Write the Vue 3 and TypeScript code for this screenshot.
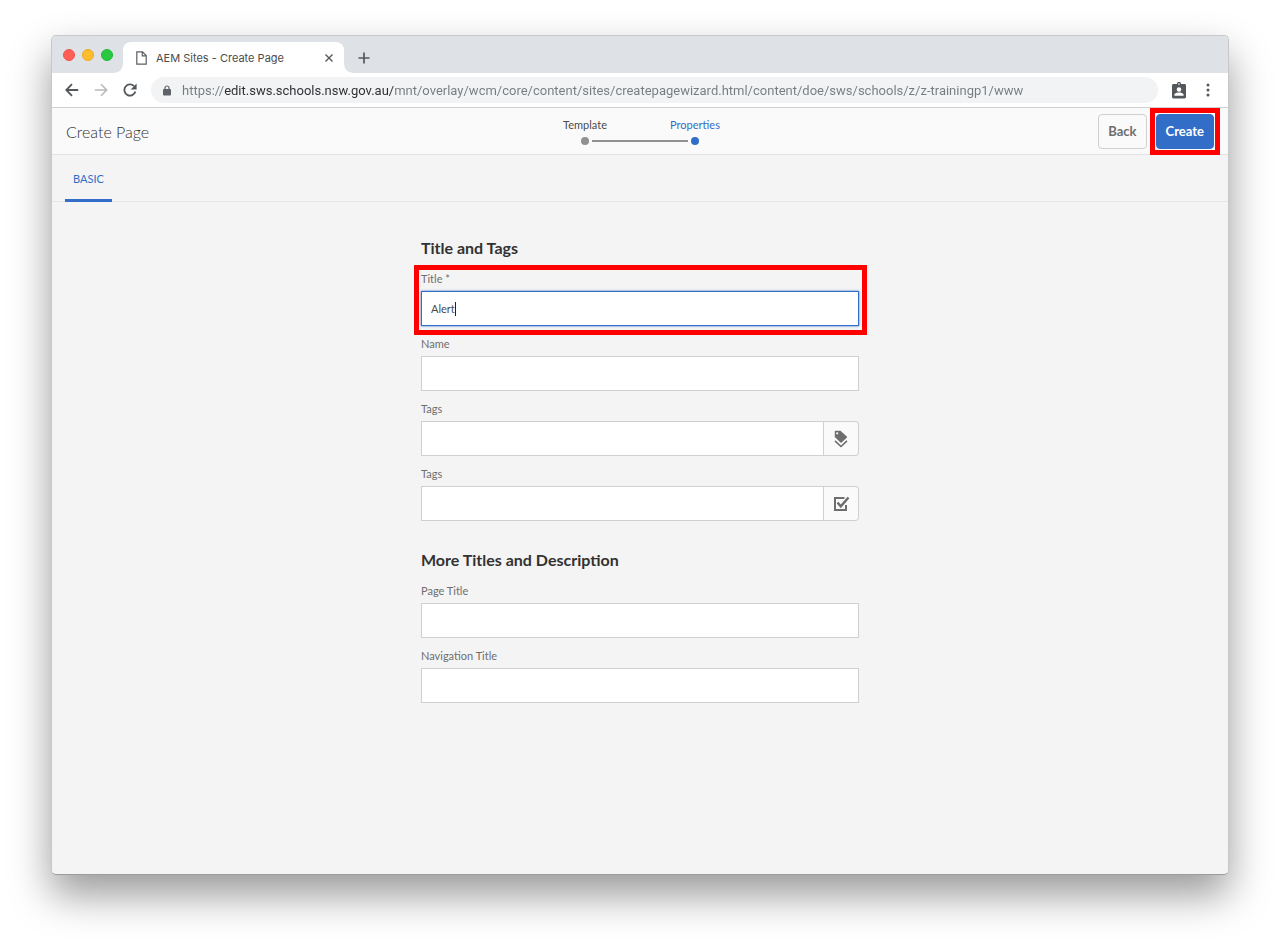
<script setup lang="ts">
import { ref } from 'vue'

interface Field {
  id: string
  label: string
  value: string
  required?: boolean
  picker?: 'tag' | 'check'
}
interface Section {
  heading: string
  fields: Field[]
}

const address = ref('https://edit.sws.schools.nsw.gov.au/mnt/overlay/wcm/core/content/sites/createpagewizard.html/content/doe/sws/schools/z/z-trainingp1/www')

const sections = ref<Section[]>([
  {
    heading: 'Title and Tags',
    fields: [
      { id: 'title', label: 'Title *', value: 'Alert', required: true },
      { id: 'name', label: 'Name', value: '' },
      { id: 'tags', label: 'Tags', value: '', picker: 'tag' },
      { id: 'more-tags', label: 'Tags', value: '', picker: 'check' },
    ],
  },
  {
    heading: 'More Titles and Description',
    fields: [
      { id: 'page-title', label: 'Page Title', value: '' },
      { id: 'nav-title', label: 'Navigation Title', value: '' },
    ],
  },
])
</script>

<template>
  <div class="desktop">
    <div class="window">
      <div class="tabstrip">
        <div class="lights">
          <button class="light red" aria-label="Close window"></button>
          <button class="light yellow" aria-label="Minimise window"></button>
          <button class="light green" aria-label="Zoom window"></button>
        </div>
        <div class="tab">
          <svg class="file" width="11" height="14" viewBox="0 0 11 14" fill="none" stroke="#5b5f63" stroke-width="1.2">
            <path d="M.8.8h5.7l3.7 3.8v8.6H.8z" /><path d="M6.3.8v4h4" />
          </svg>
          <span class="tab-title">AEM Sites - Create Page</span>
          <button class="plain" aria-label="Close tab">
            <svg width="8" height="8" viewBox="0 0 8 8" stroke="#54585c" stroke-width="1.4"><path d="M.5.5l7 7M7.5.5l-7 7" /></svg>
          </button>
        </div>
        <button class="plain new-tab" aria-label="New tab">
          <svg width="12" height="12" viewBox="0 0 12 12" stroke="#54585c" stroke-width="1.7"><path d="M6 .5v11M.5 6h11" /></svg>
        </button>
      </div>

      <div class="toolbar">
        <nav class="history">
          <button class="plain" aria-label="Go back">
            <svg width="14" height="14" viewBox="0 0 14 14" fill="none" stroke="#54585c" stroke-width="1.8"><path d="M13.2 7H1.6M7 1.2L1.3 7 7 12.8" /></svg>
          </button>
          <button class="plain" aria-label="Go forward">
            <svg width="14" height="14" viewBox="0 0 14 14" fill="none" stroke="#b8babc" stroke-width="1.6"><path d="M.8 7h11.600M7 1.200L12.700 7 7 12.800" /></svg>
          </button>
          <button class="plain" aria-label="Reload">
            <svg width="14" height="14" viewBox="0 0 14 14"><path d="M12.4 8.600A5.600 5.600 0 1 1 11 3.100" fill="none" stroke="#54585c" stroke-width="1.800" /><path d="M13.600.4v6H7.600z" fill="#54585c" /></svg>
          </button>
        </nav>
        <div class="omnibox">
          <svg width="8" height="11" viewBox="0 0 8 11"><path d="M2 5V3a2 2 0 0 1 4 0v2" fill="none" stroke="#5f6368" stroke-width="1.2" /><rect y="4" width="8" height="6.6" rx="1" fill="#5f6368" /></svg>
          <input v-model="address" class="url" type="text" aria-label="Address" />
        </div>
        <button class="plain profile" aria-label="Managed profile">
          <svg width="14" height="17" viewBox="0 0 14 17">
            <path fill="#54585c" fill-rule="evenodd" d="M1.4 2H4.9a2.1 2.1 0 0 1 4.2 0h3.5A1.4 1.4 0 0 1 14 3.4V15a1.4 1.4 0 0 1-1.4 1.4H1.4A1.4 1.4 0 0 1 0 15V3.4A1.4 1.4 0 0 1 1.4 2zM7 1.3a.8.8 0 1 0 0 1.6.8.8 0 0 0 0-1.6zM7 5.2a2.3 2.3 0 1 0 0 4.6 2.3 2.3 0 0 0 0-4.6zM2.4 13.7h9.2v-.9c0-1.5-3-2.3-4.6-2.3s-4.6.8-4.6 2.3z" />
          </svg>
        </button>
        <button class="plain" aria-label="Menu">
          <svg width="4" height="14" viewBox="0 0 4 14" fill="#54585c"><circle cx="2" cy="2" r="1.5" /><circle cx="2" cy="7" r="1.5" /><circle cx="2" cy="12" r="1.5" /></svg>
        </button>
      </div>

      <header class="header">
        <h1>Create Page</h1>
        <ol class="steps">
          <li>Template</li>
          <li class="current" aria-current="step">Properties</li>
        </ol>
        <div class="actions">
          <button class="btn">Back</button>
          <div class="marked marked-action"><button class="btn primary">Create</button></div>
        </div>
      </header>

      <div class="panel-tabs" role="tablist">
        <button class="panel-tab" role="tab" aria-selected="true">BASIC</button>
      </div>

      <main>
        <form @submit.prevent>
          <section v-for="section in sections" :key="section.heading">
            <h2>{{ section.heading }}</h2>
            <div v-for="field in section.fields" :key="field.id" class="field">
              <div :class="{ marked: field.required, 'marked-field': field.required }">
                <label :for="field.id">{{ field.label }}</label>
                <div class="control">
                  <input :id="field.id" v-model="field.value" type="text" :required="field.required" :class="{ active: field.required }" />
                  <span v-if="field.required" class="caret-line" aria-hidden="true"></span>
                  <button v-if="field.picker" type="button" class="picker" :aria-label="field.picker === 'tag' ? 'Browse tags' : 'Select tags'">
                    <svg v-if="field.picker === 'tag'" width="14" height="18" viewBox="0 0 14 18">
                      <path fill="#6e6e6e" fill-rule="evenodd" d="M1.5.8h5l6.300 5.700a.8.8 0 0 1 0 1.200L7.600 12.400a.8.8 0 0 1-1.100 0L.8 7V1.500a.7.7 0 0 1 .7-.7zM3.200 2.200a1.100 1.100 0 1 0 0 2.200 1.100 1.100 0 0 0 0-2.200z" />
                      <path fill="none" stroke="#6e6e6e" stroke-width="1.6" d="M1 10.800l6 5.700 6-5.700" />
                    </svg>
                    <svg v-else width="17" height="16" viewBox="0 0 17 16" fill="none" stroke="#6e6e6e">
                      <path stroke-width="2" d="M11.500 2H2v12h11V9" /><path stroke-width="2.4" d="M4.500 6.500l3.300 3.800L15.500 1.500" />
                    </svg>
                  </button>
                </div>
              </div>
            </div>
          </section>
        </form>
      </main>
    </div>
  </div>
</template>

<style>
body {
  margin: 0;
  background: #fff;
}
</style>

<style scoped>
* {
  box-sizing: border-box;
}
.desktop {
  display: flex;
  min-height: 100vh;
  padding: 35px 51px 68px;
}
.window {
  display: flex;
  flex: 1;
  flex-direction: column;
  min-width: 0;
  border: 1px solid #c6c8c9;
  border-bottom-color: #9c9c9c;
  border-radius: 5px;
  background: #f4f4f4;
  box-shadow: 0 20px 40px rgba(0, 0, 0, 0.4);
  font-family: Lato, "Liberation Sans", sans-serif;
  font-size: 11px;
  color: #4b4b4b;
}
button,
input {
  font: inherit;
  color: inherit;
}
.plain {
  display: flex;
  align-items: center;
  justify-content: center;
  padding: 0;
  border: 0;
  background: none;
}
svg {
  display: block;
  flex: none;
}

/* Browser chrome */
.tabstrip {
  display: flex;
  align-items: flex-end;
  height: 37px;
  border-radius: 4px 4px 0 0;
  background: #dee1e6;
  font-family: Inter, "Liberation Sans", sans-serif;
}
.lights {
  display: flex;
  align-self: center;
  gap: 7px;
  width: 71px;
  padding-left: 11px;
}
.light {
  width: 12px;
  height: 12px;
  padding: 0;
  border: 1px solid;
  border-radius: 50%;
}
.red {
  border-color: #f0524b;
  background: #ff5f57;
}
.yellow {
  border-color: #eba920;
  background: #ffbd2e;
}
.green {
  border-color: #1fb932;
  background: #28c940;
}
.tab {
  position: relative;
  display: flex;
  align-items: center;
  width: 221px;
  height: 31px;
  padding: 0 11px 0 13px;
  border-radius: 8px 8px 0 0;
  background: #fff;
}
.tab::before,
.tab::after {
  content: "";
  position: absolute;
  bottom: 0;
  width: 8px;
  height: 8px;
}
.tab::before {
  right: 100%;
  background: radial-gradient(circle at 0 0, transparent 7px, #fff 8px);
}
.tab::after {
  left: 100%;
  background: radial-gradient(circle at 100% 0, transparent 7px, #fff 8px);
}
.tab-title {
  flex: 1;
  padding-left: 9px;
  white-space: nowrap;
}
.new-tab {
  width: 40px;
  height: 31px;
}
.toolbar {
  display: flex;
  align-items: center;
  height: 35px;
  padding: 0 18px 0 13px;
  border-bottom: 1px solid #cfcfcf;
  background: #fff;
}
.history {
  display: flex;
  gap: 15px;
  margin-right: 14px;
}
.omnibox {
  display: flex;
  flex: 1;
  align-items: center;
  gap: 11px;
  height: 26px;
  padding: 0 13px 0 12px;
  border-radius: 13px;
  background: #f1f3f4;
}
.url {
  flex: 1;
  min-width: 0;
  height: 26px;
  padding: 0;
  border: 0;
  outline: 0;
  background: linear-gradient(90deg, #777b7f 42px, #2b2d30 42px, #2b2d30 212px, #777b7f 212px);
  background-clip: text;
  color: transparent;
  font-family: Roboto, "Liberation Sans", sans-serif;
  font-size: 13px;
}
.profile {
  margin: 0 20px 0 14px;
}

/* Wizard header */
.header {
  display: grid;
  grid-template-columns: 1fr auto 1fr;
  align-items: center;
  height: 47px;
  padding: 0 14px;
  border-bottom: 1px solid #e3e3e3;
  background: #fafafa;
}
h1 {
  margin: 0;
  font-size: 16px;
  font-weight: 300;
  color: #323232;
}
.steps {
  display: grid;
  grid-template-columns: 110px 110px;
  margin: 0;
  padding: 0;
  list-style: none;
  text-align: center;
  line-height: 16px;
}
.steps li {
  position: relative;
  padding-bottom: 12px;
}
.steps li::after {
  content: "";
  position: absolute;
  bottom: 0;
  left: 51px;
  width: 8px;
  height: 8px;
  border-radius: 50%;
  background: #919191;
}
.steps li:first-child::before {
  content: "";
  position: absolute;
  bottom: 3px;
  left: 62px;
  width: 96px;
  height: 2px;
  background: #919191;
}
.steps .current {
  color: #326ec8;
}
.steps .current::after {
  background: #326ec8;
}
.actions {
  display: flex;
  justify-content: flex-end;
  gap: 9px;
}
.btn {
  display: block;
  height: 35px;
  padding: 0 9px;
  border: 1px solid #d0d0d0;
  border-radius: 4px;
  background: #fafafa;
  color: #6e6e6e;
  font-size: 13px;
  font-weight: 700;
}
.primary {
  border-color: #326ec8;
  background: #326ec8;
  color: #fff;
}
.marked {
  position: relative;
}
.marked::after {
  content: "";
  position: absolute;
  border: 5px solid #f00;
  pointer-events: none;
}
.marked-action::after {
  inset: -6px;
}
.marked-field::after {
  inset: -4px -8px -9px -7px;
}
.panel-tabs {
  display: flex;
  height: 47px;
  padding: 0 13px;
  border-bottom: 1px solid #e7e7e7;
}
.panel-tab {
  height: 47px;
  padding: 3px 8px 0;
  border: 0;
  border-bottom: 3px solid #326ec8;
  background: none;
  color: #326ec8;
}

/* Form */
main {
  flex: 1;
  padding: 36px 20px 32px;
}
form {
  max-width: 438px;
  margin: 0 auto;
}
h2 {
  margin: 0 0 11px;
  font-size: 16px;
  font-weight: 700;
  line-height: 20px;
  color: #323232;
}
section + section h2 {
  margin-top: 29px;
}
.field {
  margin-bottom: 8px;
}
label {
  display: block;
  margin-bottom: 2px;
  line-height: 20px;
  color: #6e6e6e;
}
.control {
  position: relative;
  display: flex;
}
.control input {
  flex: 1;
  min-width: 0;
  height: 35px;
  padding: 0 9px;
  border: 1px solid #d0d0d0;
  border-radius: 0;
  outline: 0;
  background: #fff;
}
.control .active {
  border-color: #326ec8;
  box-shadow: 0 0 2px #326ec8;
  caret-color: transparent;
}
.caret-line {
  position: absolute;
  top: 11px;
  left: 34px;
  width: 1px;
  height: 14px;
  background: #222;
}
.picker {
  display: flex;
  align-items: center;
  justify-content: center;
  width: 35px;
  height: 35px;
  padding: 0;
  border: 1px solid #d0d0d0;
  border-left: 0;
  border-radius: 0 4px 4px 0;
  background: #fafafa;
}
</style>
